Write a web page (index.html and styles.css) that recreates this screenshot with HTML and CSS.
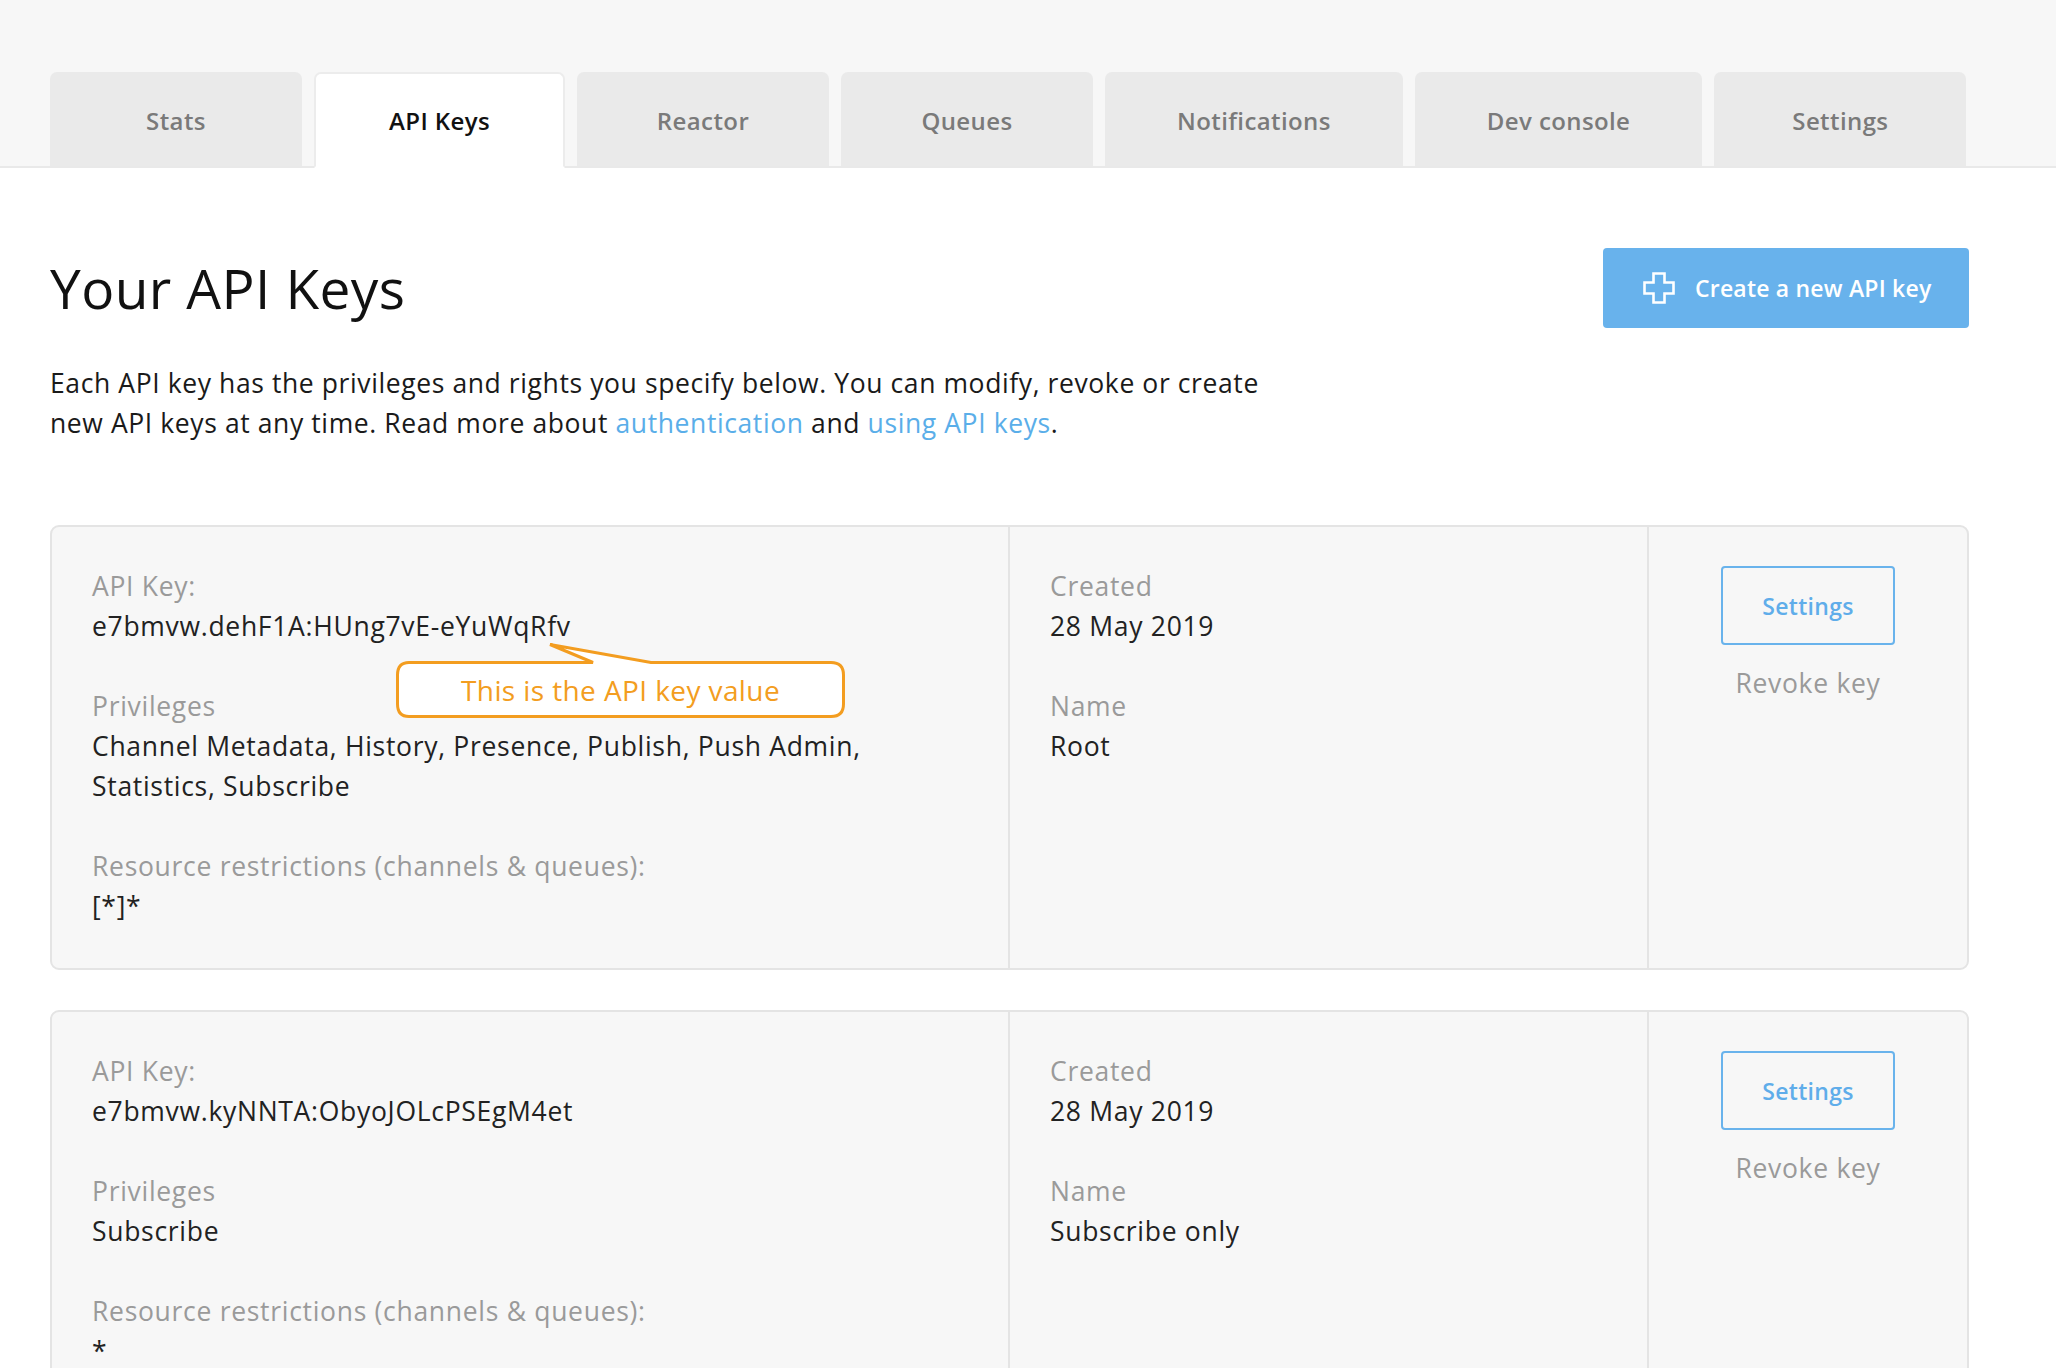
FILE: index.html
```html
<!DOCTYPE html>
<html lang="en">
<head>
<meta charset="utf-8">
<title>Your API Keys</title>
<link rel="stylesheet" href="styles.css">
</head>
<body>
<header class="header">
  <nav class="tabs">
    <a class="tab">Stats</a>
    <a class="tab tab-active">API Keys</a>
    <a class="tab">Reactor</a>
    <a class="tab">Queues</a>
    <a class="tab">Notifications</a>
    <a class="tab">Dev console</a>
    <a class="tab">Settings</a>
  </nav>
</header>
<main class="main">
  <div class="title-row">
    <h1 class="title">Your API Keys</h1>
    <button class="create-btn">
      <svg class="plus" width="32" height="32" viewBox="0 0 32 32"><path d="M10.5 1.5 H21.5 V10.5 H30.5 V21.5 H21.5 V30.5 H10.5 V21.5 H1.5 V10.5 H10.5 Z" fill="none" stroke="#fff" stroke-width="2.6"/></svg>
      <span>Create a new API key</span>
    </button>
  </div>
  <p class="intro">Each API key has the privileges and rights you specify below. You can modify, revoke or create<br>new API keys at any time. Read more about <a class="link">authentication</a> and <a class="link">using API keys</a>.</p>

  <section class="card">
    <div class="col col-main">
      <div class="field">
        <div class="label">API Key:</div>
        <div class="value">e7bmvw.dehF1A:HUng7vE-eYuWqRfv</div>
      </div>
      <div class="field">
        <div class="label">Privileges</div>
        <div class="value value-wrap">Channel Metadata, History, Presence, Publish, Push Admin, Statistics, Subscribe</div>
      </div>
      <div class="field">
        <div class="label">Resource restrictions (channels &amp; queues):</div>
        <div class="value">[*]*</div>
      </div>
      <div class="callout">
        <svg class="callout-shape" width="449" height="76" viewBox="0 0 449 76"><path d="M13 19.5 H197 L154 1.5 L255 19.5 H435 Q447.5 19.5 447.5 32 V61 Q447.5 73.5 435 73.5 H13 Q1.5 73.5 1.5 61 V32 Q1.5 19.5 13 19.5 Z" fill="#fff" stroke="#f39d20" stroke-width="3" stroke-linejoin="miter"/></svg>
        <span class="callout-text">This is the API key value</span>
      </div>
    </div>
    <div class="col col-meta">
      <div class="field">
        <div class="label">Created</div>
        <div class="value">28 May 2019</div>
      </div>
      <div class="field">
        <div class="label">Name</div>
        <div class="value">Root</div>
      </div>
    </div>
    <div class="col col-actions">
      <button class="settings-btn">Settings</button>
      <div class="revoke">Revoke key</div>
    </div>
  </section>

  <section class="card">
    <div class="col col-main">
      <div class="field">
        <div class="label">API Key:</div>
        <div class="value">e7bmvw.kyNNTA:ObyoJOLcPSEgM4et</div>
      </div>
      <div class="field">
        <div class="label">Privileges</div>
        <div class="value">Subscribe</div>
      </div>
      <div class="field">
        <div class="label">Resource restrictions (channels &amp; queues):</div>
        <div class="value">*</div>
      </div>
    </div>
    <div class="col col-meta">
      <div class="field">
        <div class="label">Created</div>
        <div class="value">28 May 2019</div>
      </div>
      <div class="field">
        <div class="label">Name</div>
        <div class="value">Subscribe only</div>
      </div>
    </div>
    <div class="col col-actions">
      <button class="settings-btn">Settings</button>
      <div class="revoke">Revoke key</div>
    </div>
  </section>
</main>
</body>
</html>
```

FILE: styles.css
```css
* { box-sizing: border-box; }

body {
  margin: 0;
  background: #ffffff;
  font-family: "Open Sans", Lato, "Liberation Sans", sans-serif;
  color: #1a1a1a;
}

.header {
  background: #f7f7f7;
  padding: 72px 0 0 50px;
  border-bottom: 2px solid #e9e9e9;
}

.tabs {
  display: flex;
  gap: 12px;
  margin-bottom: -2px;
}

.tab {
  min-width: 252px;
  height: 96px;
  padding: 2px 72px 0;
  display: flex;
  align-items: center;
  justify-content: center;
  background: #eaeaea;
  border-radius: 7px 7px 0 0;
  color: #7a7a7a;
  font-size: 24px;
  letter-spacing: 0.4px;
  font-weight: 600;
  text-decoration: none;
  white-space: nowrap;
  border-bottom: 2px solid #e9e9e9;
}

.tab-active {
  min-width: 251px;
  background: #ffffff;
  color: #111111;
  border: 2px solid #ececec;
  border-bottom: 2px solid #ffffff;
  padding-top: 0;
}

.main {
  padding: 0 87px 60px 50px;
}

.title-row {
  margin-top: 80px;
  height: 80px;
  display: flex;
  align-items: center;
  justify-content: space-between;
}

.title {
  margin: 0;
  font-size: 55px;
  letter-spacing: 0.4px;
  font-weight: 400;
  color: #111111;
  line-height: 1.2;
}

.create-btn {
  width: 366px;
  height: 80px;
  padding: 0 30px 0 40px;
  display: flex;
  align-items: center;
  gap: 20px;
  background: #68b2ec;
  border: none;
  border-radius: 4px;
  color: #ffffff;
  font-family: inherit;
  font-size: 23px;
  letter-spacing: 0.2px;
  font-weight: 600;
  white-space: nowrap;
}

.plus { flex: none; }

.intro {
  margin: 35px 0 82px;
  font-size: 26.5px;
  letter-spacing: 0.6px;
  line-height: 40px;
  color: #1a1a1a;
  white-space: nowrap;
}

.link {
  color: #5aaee9;
  text-decoration: none;
}

.card {
  display: grid;
  grid-template-columns: 956px 639px 1fr;
  background: #f7f7f7;
  border: 2px solid #e4e4e4;
  border-radius: 9px;
  margin-bottom: 40px;
}

.col {
  padding: 39px 40px 42px;
}

.col-main { position: relative; }

.col-meta,
.col-actions {
  border-left: 2px solid #e4e4e4;
}

.field + .field { margin-top: 40px; }

.label,
.value,
.revoke {
  font-size: 26.5px;
  letter-spacing: 0.7px;
  line-height: 40px;
}

.label { color: #9a9a9a; }
.value { color: #222222; }

.value-wrap { max-width: 800px; }

.col-actions {
  display: flex;
  flex-direction: column;
  align-items: center;
  padding-top: 39px;
}

.settings-btn {
  width: 174px;
  height: 79px;
  background: #f7f7f7;
  border: 2px solid #69b3ec;
  border-radius: 4px;
  color: #5fadea;
  font-family: inherit;
  font-size: 23px;
  letter-spacing: 0.3px;
  font-weight: 600;
}

.revoke {
  margin-top: 18px;
  color: #9a9a9a;
}

.callout {
  position: absolute;
  left: 344px;
  top: 116px;
  width: 449px;
  height: 76px;
}

.callout-shape {
  position: absolute;
  left: 0;
  top: 0;
}

.callout-text {
  position: absolute;
  left: 0;
  right: 0;
  top: 22px;
  height: 50px;
  display: flex;
  align-items: center;
  justify-content: center;
  color: #f39d20;
  font-size: 28px;
  letter-spacing: 0.4px;
}
```
